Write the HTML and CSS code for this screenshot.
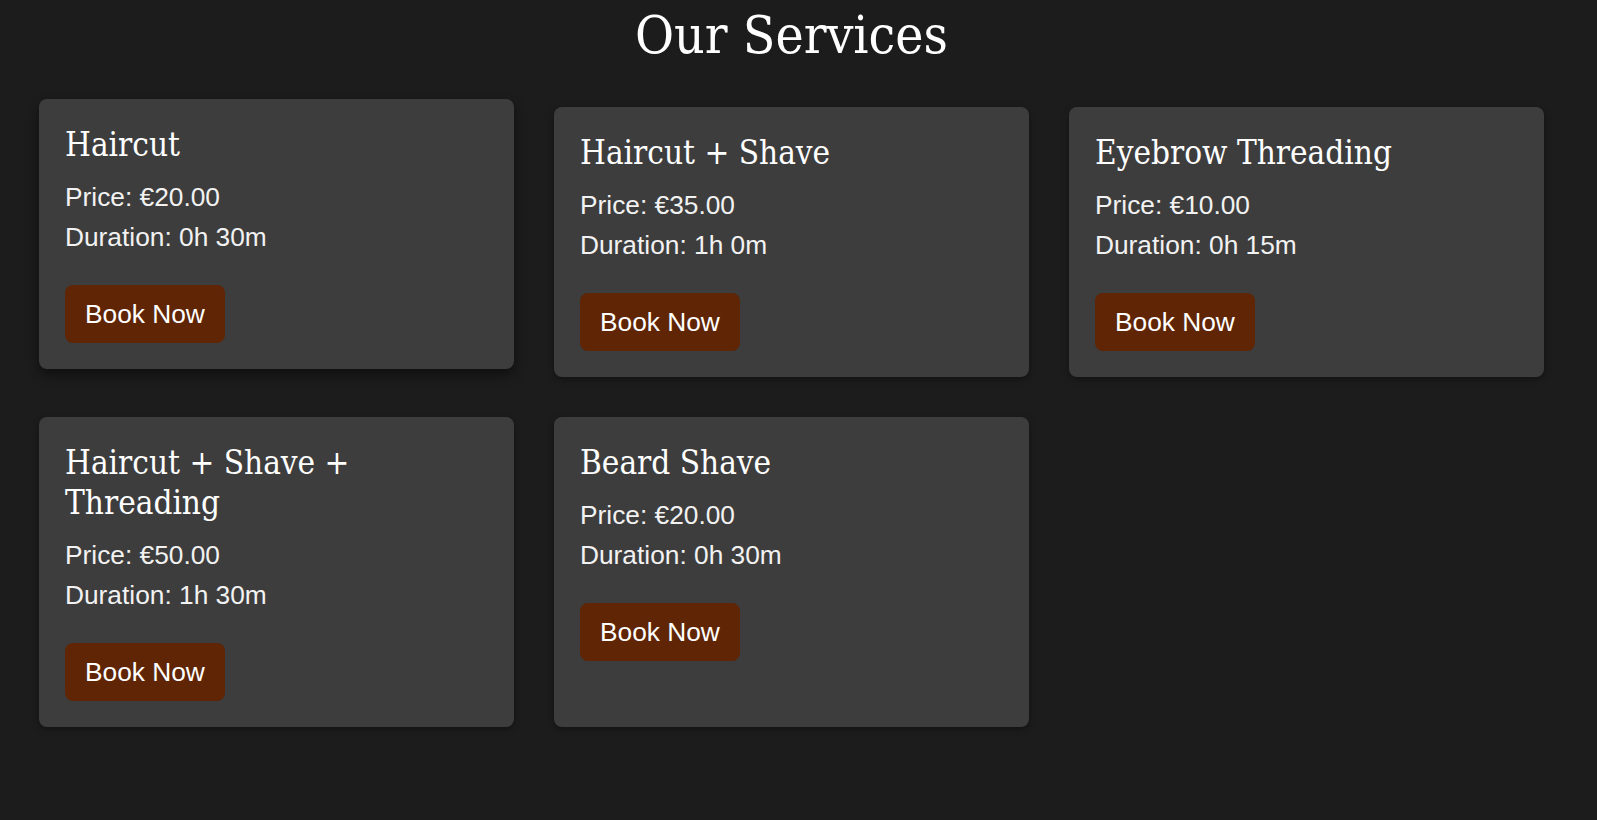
FILE: index.html
```html
<!DOCTYPE html>
<html lang="en">
<head>
<meta charset="utf-8">
<title>Our Services</title>
<link rel="stylesheet" href="styles.css">
</head>
<body>
<main class="services">
  <h1 class="services-title">Our Services</h1>
  <div class="service-grid">
    <article class="service-card is-raised">
      <h3 class="service-name">Haircut</h3>
      <p class="service-meta">Price: €20.00</p>
      <p class="service-meta">Duration: 0h 30m</p>
      <button class="book-btn" type="button">Book Now</button>
    </article>
    <article class="service-card">
      <h3 class="service-name">Haircut + Shave</h3>
      <p class="service-meta">Price: €35.00</p>
      <p class="service-meta">Duration: 1h 0m</p>
      <button class="book-btn" type="button">Book Now</button>
    </article>
    <article class="service-card">
      <h3 class="service-name">Eyebrow Threading</h3>
      <p class="service-meta">Price: €10.00</p>
      <p class="service-meta">Duration: 0h 15m</p>
      <button class="book-btn" type="button">Book Now</button>
    </article>
    <article class="service-card">
      <h3 class="service-name">Haircut + Shave + Threading</h3>
      <p class="service-meta">Price: €50.00</p>
      <p class="service-meta">Duration: 1h 30m</p>
      <button class="book-btn" type="button">Book Now</button>
    </article>
    <article class="service-card">
      <h3 class="service-name">Beard Shave</h3>
      <p class="service-meta">Price: €20.00</p>
      <p class="service-meta">Duration: 0h 30m</p>
      <button class="book-btn" type="button">Book Now</button>
    </article>
  </div>
</main>
</body>
</html>
```

FILE: styles.css
```css
html, body {
  margin: 0;
  padding: 0;
  background: #1c1c1c;
}

body {
  font-family: "Liberation Sans", Arial, sans-serif;
  color: #f2f2f2;
}

.services {
  padding: 4px 53px 40px 39px;
}

.services-title {
  margin: 0 0 41px;
  text-align: center;
  font-family: "DejaVu Serif Condensed", "DejaVu Serif", serif;
  font-stretch: semi-condensed;
  font-weight: normal;
  font-size: 53px;
  line-height: 62px;
  color: #ffffff;
}

.service-grid {
  display: grid;
  grid-template-columns: repeat(3, 1fr);
  column-gap: 40px;
  row-gap: 40px;
}

.service-card {
  background: #3d3d3d;
  border-radius: 8px;
  padding: 26px;
  box-shadow: 0 2px 6px rgba(0, 0, 0, 0.35);
}

.service-card.is-raised {
  transform: translateY(-8px);
  box-shadow: 0 6px 12px rgba(0, 0, 0, 0.45);
}

.service-name {
  margin: 0 0 12px;
  font-family: "DejaVu Serif Condensed", "DejaVu Serif", serif;
  font-stretch: semi-condensed;
  font-weight: normal;
  font-size: 33px;
  line-height: 40px;
  color: #ffffff;
}

.service-meta {
  margin: 0;
  font-size: 26.3px;
  line-height: 40px;
  color: #f2f2f2;
}

.book-btn {
  display: inline-block;
  margin-top: 28px;
  padding: 14px 20px;
  border: 0;
  border-radius: 8px;
  background: #5f2505;
  color: #ffffff;
  font-family: "Liberation Sans", Arial, sans-serif;
  font-size: 26.3px;
  line-height: 30px;
  cursor: pointer;
}
```
